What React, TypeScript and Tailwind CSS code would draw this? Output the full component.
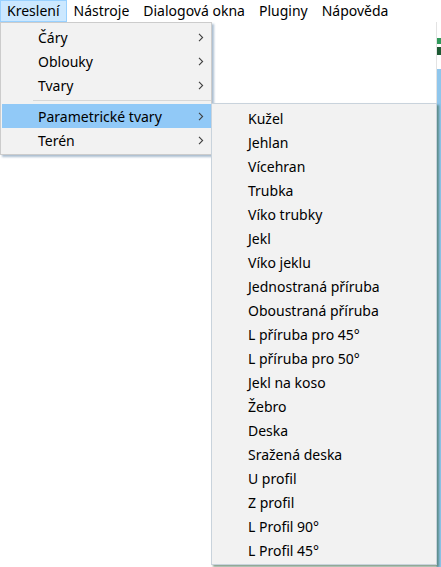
import React from 'react';

const menuBar = ['Kreslení', 'Nástroje', 'Dialogová okna', 'Pluginy', 'Nápověda'];

const firstMenu = [
    { label: 'Čáry' },
    { label: 'Oblouky' },
    { label: 'Tvary', separatorAfter: true },
    { label: 'Parametrické tvary', active: true },
    { label: 'Terén' },
];

const shapes = [
    'Kužel',
    'Jehlan',
    'Vícehran',
    'Trubka',
    'Víko trubky',
    'Jekl',
    'Víko jeklu',
    'Jednostraná příruba',
    'Oboustraná příruba',
    'L příruba pro 45°',
    'L příruba pro 50°',
    'Jekl na koso',
    'Žebro',
    'Deska',
    'Sražená deska',
    'U profil',
    'Z profil',
    'L Profil 90°',
    'L Profil 45°',
];

function Chevron() {
    return (
        <svg width="6" height="9" viewBox="0 0 6 9" className="shrink-0">
            <path d="M1 0.8 L4.6 4.5 L1 8.2" fill="none" stroke="#404040" strokeWidth="1.1" />
        </svg>
    );
}

export default function App() {
    return (
        <div
            className="relative w-[441px] h-[567px] overflow-hidden bg-white text-[14px] text-black flex flex-col"
            style={{ fontFamily: '"Segoe UI", "Noto Sans", "Open Sans", sans-serif' }}
        >
            {/* Menu bar */}
            <div className="flex h-[22px] bg-white leading-[20px] shrink-0">
                {menuBar.map((m, i) => (
                    <div
                        key={m}
                        className={`px-[6px] border whitespace-nowrap ${i === 0 ? 'bg-[#cce8ff] border-[#99d1ff]' : 'border-transparent'}`}
                    >
                        {m}
                    </div>
                ))}
            </div>

            {/* Window body underneath */}
            <div className="flex flex-1">
                <div className="flex-1 bg-white border-r border-[#e3e3e3]" />
                <div className="w-[4px] flex flex-col">
                    <div className="h-[16px] bg-white" />
                    <div className="h-[6px] bg-[#2f9a5a]" />
                    <div className="h-[3px] bg-white" />
                    <div className="h-[8px] bg-[#1d5a34]" />
                    <div className="h-[14px] bg-white" />
                    <div className="flex-1 bg-[#8fc6ec]" />
                </div>
            </div>

            {/* First dropdown */}
            <div className="absolute left-0 top-[22px] w-[212px] bg-[#f2f2f2] border border-[#cccccc] py-[2px] shadow-[2px_2px_2px_rgba(70,110,150,0.45)]">
                {firstMenu.map((item) => (
                    <React.Fragment key={item.label}>
                        <div
                            className={`flex items-center h-[24px] pl-[36px] pr-[7px] ml-[1px] ${item.active ? 'bg-[#91c9f7]' : ''}`}
                        >
                            <span className="flex-1 whitespace-nowrap">{item.label}</span>
                            <Chevron />
                        </div>
                        {item.separatorAfter && (
                            <div className="h-[7px] flex items-center pl-[32px]">
                                <div className="h-px w-full bg-[#d7d7d7]" />
                            </div>
                        )}
                    </React.Fragment>
                ))}
            </div>

            {/* Submenu */}
            <div className="absolute left-[211px] top-[103px] w-[226px] bg-[#f2f2f2] border border-[#c9d3dc] py-[2px] shadow-[2px_2px_2px_rgba(60,100,70,0.6)]">
                {shapes.map((s) => (
                    <div key={s} className="flex items-center h-[24px] pl-[36px] whitespace-nowrap">
                        {s}
                    </div>
                ))}
            </div>
        </div>
    );
}
